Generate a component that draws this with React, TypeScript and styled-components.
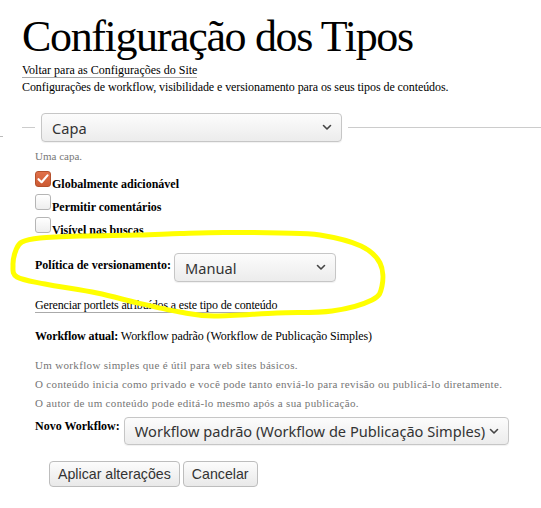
import React from 'react';
import styled, { createGlobalStyle } from 'styled-components';

const GlobalStyle = createGlobalStyle`
  html, body {
    margin: 0;
    background: #fff;
  }
  body {
    font-family: 'Liberation Serif', 'Times New Roman', serif;
    color: #000;
  }
`;

// hand-drawn highlight around the versioning field
const markerPoints: [number, number][] = [
  [22, 242], [40, 238], [80, 236], [138, 235], [180, 233.5], [224, 232.5], [280, 233], [320, 235],
  [361, 246], [380, 263], [382, 286], [372, 300], [332, 311], [277, 313], [214, 316],
  [180, 312], [138, 303], [97, 293], [45, 284], [17, 277], [13, 265], [16, 250],
];

const smoothPath = (pts: [number, number][]) => {
  const n = pts.length;
  let d = `M${pts[0][0]} ${pts[0][1]}`;
  for (let i = 0; i < n; i++) {
    const p0 = pts[(i - 1 + n) % n];
    const p1 = pts[i];
    const p2 = pts[(i + 1) % n];
    const p3 = pts[(i + 2) % n];
    const c1x = p1[0] + (p2[0] - p0[0]) / 6;
    const c1y = p1[1] + (p2[1] - p0[1]) / 6;
    const c2x = p2[0] - (p3[0] - p1[0]) / 6;
    const c2y = p2[1] - (p3[1] - p1[1]) / 6;
    d += ` C${c1x.toFixed(1)} ${c1y.toFixed(1)}, ${c2x.toFixed(1)} ${c2y.toFixed(1)}, ${p2[0]} ${p2[1]}`;
  }
  return d;
};

const Chevron = () => (
  <svg width="10" height="7" viewBox="0 0 10 7" aria-hidden="true">
    <path d="M1.5 1.5 L5 5 L8.5 1.5" fill="none" stroke="#444" strokeWidth="1.6" strokeLinecap="round" strokeLinejoin="round" />
  </svg>
);

const Select = ({ value, width, height = 29 }: { value: string; width: number; height?: number }) => (
  <SelectBox $width={width} $height={height}>
    <span>{value}</span>
    <Chevron />
  </SelectBox>
);

const Check = ({ checked }: { checked?: boolean }) => (
  <CheckBox $checked={checked}>
    {checked && (
      <svg width="14" height="14" viewBox="0 0 14 14" aria-hidden="true">
        <path d="M2.5 7.2 L5.6 10.2 L11.5 3.4" fill="none" stroke="#fff" strokeWidth="2.2" strokeLinecap="round" strokeLinejoin="round" />
      </svg>
    )}
  </CheckBox>
);

const App = () => {
  return (
    <Page>
      <GlobalStyle />
      <Header>
        <Title>Configuração dos Tipos</Title>
        <BackLink href="#">Voltar para as Configurações do Site</BackLink>
        <Lead>Configurações de workflow, visibilidade e versionamento para os seus tipos de conteúdos.</Lead>
      </Header>

      <LegendRow>
        <Stub />
        <Rule $width={13} />
        <Select value="Capa" width={301} />
        <Rule />
      </LegendRow>

      <Body>
        <Hint>Uma capa.</Hint>

        <CheckList>
          <CheckRow>
            <Check checked />
            <CheckLabel>Globalmente adicionável</CheckLabel>
          </CheckRow>
          <CheckRow>
            <Check />
            <CheckLabel>Permitir comentários</CheckLabel>
          </CheckRow>
          <CheckRow>
            <Check />
            <CheckLabel>Visível nas buscas</CheckLabel>
          </CheckRow>
        </CheckList>

        <FieldRow>
          <FieldLabel>Política de versionamento:</FieldLabel>
          <Select value="Manual" width={162} />
        </FieldRow>

        <PortletLink href="#">Gerenciar portlets atribuídos a este tipo de conteúdo</PortletLink>

        <Current>
          <b>Workflow atual:</b> Workflow padrão (Workflow de Publicação Simples)
        </Current>

        <Notes>
          <li>Um workflow simples que é útil para web sites básicos.</li>
          <li>O conteúdo inicia como privado e você pode tanto enviá-lo para revisão ou publicá-lo diretamente.</li>
          <li>O autor de um conteúdo pode editá-lo mesmo após a sua publicação.</li>
        </Notes>

        <NewRow>
          <SmallLabel>Novo Workflow:</SmallLabel>
          <Select value="Workflow padrão (Workflow de Publicação Simples)" width={385} height={28} />
        </NewRow>

        <Actions>
          <Button>Aplicar alterações</Button>
          <Button>Cancelar</Button>
        </Actions>
      </Body>

      <Marker viewBox="0 0 541 508" aria-hidden="true">
        <path d={smoothPath(markerPoints) + ' Z'} fill="none" stroke="#ffff00" strokeWidth="5" strokeLinejoin="round" />
      </Marker>
    </Page>
  );
};

const Page = styled.div`
  position: relative;
  width: 541px;
  height: 508px;
  overflow: hidden;
`;

const Header = styled.header`
  display: flex;
  flex-direction: column;
  align-items: flex-start;
  padding: 15px 0 0 22px;
`;

const Title = styled.h1`
  margin: 0;
  font-size: 44px;
  line-height: 44px;
  font-weight: normal;
  letter-spacing: -1.35px;
`;

const BackLink = styled.a`
  margin-top: 4px;
  font-size: 12px;
  line-height: 14px;
  color: #000;
  text-decoration: none;
  border-bottom: 1px solid #aaa;
`;

const Lead = styled.p`
  margin: 2px 0 0;
  font-size: 12px;
  line-height: 14px;
  letter-spacing: -0.08px;
`;

const LegendRow = styled.div`
  display: flex;
  align-items: center;
  gap: 6px;
  margin-top: 19px;
`;

const Stub = styled.span`
  width: 3px;
  height: 1px;
  background: #bbb;
  align-self: flex-end;
  margin: 0 13px 5px 0;
`;

const Rule = styled.span<{ $width?: number }>`
  height: 1px;
  background: #ccc;
  flex: ${({ $width }) => ($width ? `0 0 ${$width}px` : '1')};
`;

const SelectBox = styled.div<{ $width: number; $height: number }>`
  box-sizing: border-box;
  display: flex;
  align-items: center;
  justify-content: space-between;
  width: ${({ $width }) => $width}px;
  height: ${({ $height }) => $height}px;
  padding: 0 9px 0 10px;
  border: 1px solid #c6c6c6;
  border-radius: 4px;
  background: linear-gradient(#fcfcfc, #ececec);
  box-shadow: 0 1px 1px rgba(0, 0, 0, 0.06);
  font-family: 'Noto Sans', 'Open Sans', sans-serif;
  font-size: 14.6px;
  color: #333;
  white-space: nowrap;
  flex-shrink: 0;
`;

const Body = styled.div`
  padding-left: 35px;
`;

const Hint = styled.p`
  margin: 7px 0 0;
  font-size: 11px;
  line-height: 14px;
  color: #777;
`;

const CheckList = styled.div`
  display: flex;
  flex-direction: column;
  gap: 7px;
  margin-top: 8px;
`;

const CheckRow = styled.label`
  display: flex;
  align-items: flex-end;
`;

const CheckBox = styled.span<{ $checked?: boolean }>`
  box-sizing: border-box;
  display: flex;
  align-items: center;
  justify-content: center;
  width: 16px;
  height: 16px;
  border-radius: 3px;
  border: 1px solid ${({ $checked }) => ($checked ? '#b4512d' : '#b5b5b5')};
  background: ${({ $checked }) =>
    $checked ? 'linear-gradient(#e0714a, #cc5a33)' : 'linear-gradient(#fff, #eee)'};
`;

const CheckLabel = styled.span`
  margin: 0 0 -3px 1px;
  font-size: 12px;
  line-height: 12px;
  font-weight: bold;
`;

const FieldRow = styled.div`
  display: flex;
  align-items: center;
  gap: 3px;
  margin-top: 20px;
`;

const FieldLabel = styled.span`
  font-size: 12px;
  font-weight: bold;
  margin-top: -4px;
`;

const PortletLink = styled.a`
  display: inline-block;
  margin-top: 16px;
  font-size: 12px;
  line-height: 14px;
  letter-spacing: -0.15px;
  color: #000;
  text-decoration: none;
  border-bottom: 1px solid #aaa;
`;

const Current = styled.p`
  margin: 16px 0 0;
  font-size: 12px;
  line-height: 14px;
  letter-spacing: -0.08px;
`;

const Notes = styled.ul`
  list-style: none;
  margin: 15px 0 0;
  padding: 0;
  display: flex;
  flex-direction: column;
  gap: 5px;
  font-size: 11px;
  line-height: 14px;
  color: #757575;
  letter-spacing: 0.33px;
`;

const NewRow = styled.div`
  display: flex;
  align-items: flex-start;
  gap: 4px;
  margin-top: 7px;
`;

const SmallLabel = styled.span`
  font-size: 12px;
  font-weight: bold;
  padding-top: 2px;
`;

const Actions = styled.div`
  display: flex;
  gap: 3px;
  margin: 16px 0 0 14px;
`;

const Button = styled.button`
  box-sizing: border-box;
  height: 26px;
  padding: 0 8px;
  border: 1px solid #bdbdbd;
  border-radius: 4px;
  background: linear-gradient(#fcfcfc, #e9e9e9);
  font-family: 'Liberation Sans', Arial, sans-serif;
  font-size: 14.2px;
  color: #333;
`;

const Marker = styled.svg`
  position: absolute;
  inset: 0;
  width: 541px;
  height: 508px;
  pointer-events: none;
`;

export default App;
